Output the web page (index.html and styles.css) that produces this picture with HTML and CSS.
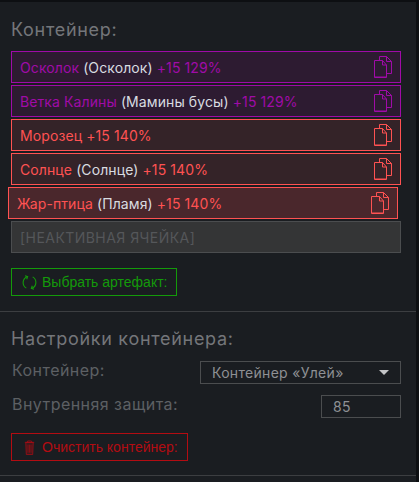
FILE: index.html
```html
<!DOCTYPE html>
<html lang="ru">
<head>
    <meta charset="UTF-8">
    <meta name="viewport" content="width=device-width, initial-scale=1.0">
    <title>Контейнер</title>
    <link rel="stylesheet" href="styles.css">
</head>
<body>
<svg class="defs" width="0" height="0">
    <symbol id="copy" viewBox="0 0 18 22">
        <path d="M5.5 4.5V.5h7l5 5v12h-5" fill="none" stroke="currentColor"/>
        <path d="M12.5 .5v5h5" fill="none" stroke="currentColor"/>
        <path d="M.5 4.5h8l4 4.5v12.5H.5z" fill="none" stroke="currentColor"/>
        <path d="M8.5 4.5V9h4" fill="none" stroke="currentColor"/>
        <path d="M1 20.5h11" fill="none" stroke="currentColor" stroke-opacity=".5"/>
    </symbol>
</svg>
<div class="panel">
    <section class="block block_top">
        <h2 class="title">Контейнер:</h2>
        <div class="slots">
            <div class="slot slot_purple">
                <span class="slot_text">Осколок <b>(Осколок)</b> +15 129%</span>
                <svg class="copy"><use href="#copy"/></svg>
            </div>
            <div class="slot slot_purple">
                <span class="slot_text">Ветка Калины <b>(Мамины бусы)</b> +15 129%</span>
                <svg class="copy"><use href="#copy"/></svg>
            </div>
            <div class="slot slot_red">
                <span class="slot_text">Морозец +15 140%</span>
                <svg class="copy"><use href="#copy"/></svg>
            </div>
            <div class="slot slot_red">
                <span class="slot_text">Солнце <b>(Солнце)</b> +15 140%</span>
                <svg class="copy"><use href="#copy"/></svg>
            </div>
            <div class="slot slot_red slot_hover">
                <span class="slot_text">Жар-птица <b>(Пламя)</b> +15 140%</span>
                <svg class="copy"><use href="#copy"/></svg>
            </div>
            <div class="slot slot_off">
                <span class="slot_text">[НЕАКТИВНАЯ ЯЧЕЙКА]</span>
            </div>
        </div>
        <a href="#" class="button button_green">
            <svg class="button_icon" viewBox="0 0 16 16" fill="none" stroke="currentColor" stroke-width="1.2">
                <path d="M5.5 1.8A6.8 6.8 0 0 0 4.6 14"/>
                <path d="M10.5 14.2A6.8 6.8 0 0 0 11.4 2"/>
                <path d="M3.2 .8l2.8 1-1 2.8M12.8 15.2l-2.8-1 1-2.8"/>
            </svg>
            <span>Выбрать артефакт:</span>
        </a>
    </section>
    <section class="block block_settings">
        <h2 class="title">Настройки контейнера:</h2>
        <div class="field field_select">
            <span class="label">Контейнер:</span>
            <div class="select">
                <span>Контейнер «Улей»</span>
                <i class="arrow"></i>
            </div>
        </div>
        <div class="field field_input">
            <span class="label">Внутренняя защита:</span>
            <div class="input">85</div>
        </div>
        <a href="#" class="button button_red">
            <svg class="button_icon" viewBox="0 0 14 16" fill="none" stroke="currentColor" stroke-opacity=".75">
                <path d="M2 2.5h10M5 2.5V1h4v1.5"/>
                <path d="M3 2.5l.6 13h6.8l.6-13z" fill="currentColor" fill-opacity=".25"/>
                <path d="M5.4 5v8.5M7 5v8.5M8.6 5v8.5" stroke-width=".8"/>
            </svg>
            <span>Очистить контейнер:</span>
        </a>
    </section>
</div>
</body>
</html>
```

FILE: styles.css
```css
html, body {
    margin: 0;
    padding: 0;
}
body {
    height: 482px;
    overflow: hidden;
    background-color: #0d0f12;
    font-family: "Inter", "Noto Sans", sans-serif;
}
.defs {
    display: block;
}
.panel {
    width: 416px;
    height: 480px;
    margin-top: 2px;
    background-color: #1a1d21;
}
.block {
    box-sizing: border-box;
    padding: 0 15px 0 11px;
    border-bottom: 1px solid #3c3e41;
}
.block_top {
    height: 310px;
    padding-top: 17px;
}
.block_settings {
    height: 164px;
    padding-top: 16px;
}
.title {
    margin: 0;
    color: #74767a;
    font-size: 18px;
    font-weight: 400;
    line-height: 22px;
    letter-spacing: 0.7px;
}
.slots {
    display: flex;
    flex-direction: column;
    gap: 2px;
    margin-top: 10px;
}
.slot {
    display: flex;
    align-items: center;
    justify-content: space-between;
    box-sizing: border-box;
    height: 32px;
    padding: 0 8px 0 8px;
    border: 1px solid;
    font-size: 14px;
    letter-spacing: 0.1px;
}
.slot b {
    color: #d8dce0;
    font-weight: 400;
}
.slot_purple {
    color: #a00ba8;
    border-color: #a00ba8;
    background-color: #2d1b31;
}
.slot_red {
    color: #ff5252;
    border-color: #ff5252;
    background-color: #342328;
}
.slot_hover {
    transform: translateX(-3px);
    background-color: #4a272c;
}
.slot_off {
    color: #55575a;
    border-color: #4b4d4f;
    background-color: #343536;
    letter-spacing: 0.45px;
}
.copy {
    width: 18px;
    height: 22px;
}
.button {
    display: inline-flex;
    align-items: center;
    gap: 5px;
    box-sizing: border-box;
    height: 28px;
    margin-top: 15px;
    padding: 0 9px 0 10px;
    border: 1px solid;
    font-family: "Liberation Sans", sans-serif;
    font-size: 14px;
    white-space: nowrap;
    text-decoration: none;
}
.button_icon {
    flex-shrink: 0;
    width: 15px;
    height: 15px;
}
.button_green {
    width: 166px;
    color: #149a0a;
    border-color: #149a0a;
}
.button_red {
    width: 177px;
    color: #b30c12;
    border-color: #b30c12;
}
.field {
    display: flex;
    align-items: center;
    justify-content: space-between;
    color: #5d6064;
    font-size: 16px;
    letter-spacing: 0.45px;
}
.label {
    padding: 0 0 4px 1px;
}
.field_select {
    margin-top: 10px;
}
.field_input {
    margin-top: 10px;
}
.select {
    display: flex;
    align-items: center;
    justify-content: space-between;
    box-sizing: border-box;
    width: 201px;
    height: 23px;
    padding: 0 11px;
    border: 1px solid #4b4d4f;
    color: #8e9094;
    font-size: 14px;
    letter-spacing: 0.3px;
}
.arrow {
    width: 0;
    height: 0;
    border-top: 5px solid #c4c5c7;
    border-left: 5px solid transparent;
    border-right: 5px solid transparent;
}
.input {
    box-sizing: border-box;
    width: 80px;
    height: 23px;
    padding-left: 11px;
    border: 1px solid #4b4d4f;
    color: #8e9094;
    font-size: 14px;
    line-height: 21px;
}
```
